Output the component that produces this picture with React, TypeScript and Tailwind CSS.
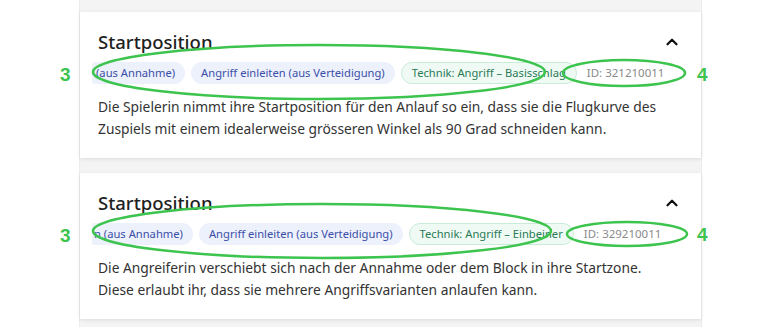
import React from "react";
import { ChevronUp } from "lucide-react";

type Item = {
  chips: { label: string; tone: "blue" | "green" }[];
  shift: number;
  id: string;
  text: string[];
};

const items: Item[] = [
  {
    chips: [
      { label: "(aus Annahme)", tone: "blue" },
      { label: "Angriff einleiten (aus Verteidigung)", tone: "blue" },
      { label: "Technik: Angriff – Basisschlag", tone: "green" },
    ],
    shift: 6,
    id: "321210011",
    text: [
      "Die Spielerin nimmt ihre Startposition für den Anlauf so ein, dass sie die Flugkurve des",
      "Zuspiels mit einem idealerweise grösseren Winkel als 90 Grad schneiden kann.",
    ],
  },
  {
    chips: [
      { label: "n (aus Annahme)", tone: "blue" },
      { label: "Angriff einleiten (aus Verteidigung)", tone: "blue" },
      { label: "Technik: Angriff – Einbeiner", tone: "green" },
    ],
    shift: 8,
    id: "329210011",
    text: [
      "Die Angreiferin verschiebt sich nach der Annahme oder dem Block in ihre Startzone.",
      "Diese erlaubt ihr, dass sie mehrere Angriffsvarianten anlaufen kann.",
    ],
  },
];

const Chip = ({ label, tone }: { label: string; tone: "blue" | "green" }) => (
  <span
    className={
      tone === "blue"
        ? "shrink-0 whitespace-nowrap rounded-full bg-[#edf1fc] px-[10px] h-[22px] leading-[22px] text-[11.2px] text-[#3b4fa8]"
        : "shrink-0 whitespace-nowrap rounded-full border border-[#c9ecd8] bg-[#effaf4] px-[10px] h-[22px] leading-[20px] text-[11.2px] text-[#2a7a57]"
    }
  >
    {label}
  </span>
);

const Card = ({ item }: { item: Item }) => (
  <div className="bg-white shadow-[0_1px_4px_rgba(0,0,0,0.10)] pt-[16px] pb-[18px]">
    <div className="flex items-center justify-between pl-[18px] pr-[20px]">
      <h2 className="text-[18.5px] leading-[28px] font-medium text-[#1f1f1f]">Startposition</h2>
      <ChevronUp size={18} strokeWidth={3} className="text-[#111]" />
    </div>
    <div className="mt-[6px] ml-[12px] mr-[18px] flex items-center gap-[8px] overflow-hidden">
      <div className="flex items-center gap-[6px]" style={{ marginLeft: -item.shift }}>
        {item.chips.map((c) => (
          <Chip key={c.label} label={c.label} tone={c.tone} />
        ))}
      </div>
      <span className="whitespace-nowrap text-[11.5px] text-[#8a8a8a] pl-[2px]">ID: {item.id}</span>
    </div>
    <div className="mt-[12px] pl-[18px] text-[13.8px] leading-[22px] text-[#333]">
      {item.text.map((t) => (
        <p key={t}>{t}</p>
      ))}
    </div>
  </div>
);

export default function App() {
  return (
    <div className="relative w-[770px] h-[327px] overflow-hidden bg-white" style={{ fontFamily: '"Noto Sans", sans-serif' }}>
      <div className="ml-[79px] w-[623px] h-full bg-[#f4f4f4] border-x border-[#ececec] pt-[12px] flex flex-col gap-[15px]">
        {items.map((it) => (
          <Card key={it.id} item={it} />
        ))}
      </div>

      <svg className="absolute inset-0 pointer-events-none" width="770" height="327" viewBox="0 0 770 327">
        <g fill="none" stroke="#3dc44f" strokeWidth="2.5">
          <ellipse cx="319" cy="72" rx="226" ry="27" />
          <ellipse cx="624" cy="73" rx="61" ry="13" />
          <ellipse cx="322" cy="231" rx="229" ry="27" />
          <ellipse cx="627" cy="234" rx="60" ry="12" />
        </g>
      </svg>
      <span className="absolute left-[60px] top-[61px] text-[19px] font-bold text-[#3dc44f]" style={{ fontFamily: '"Liberation Sans", sans-serif' }}>3</span>
      <span className="absolute left-[697px] top-[61px] text-[19px] font-bold text-[#3dc44f]" style={{ fontFamily: '"Liberation Sans", sans-serif' }}>4</span>
      <span className="absolute left-[60px] top-[222px] text-[19px] font-bold text-[#3dc44f]" style={{ fontFamily: '"Liberation Sans", sans-serif' }}>3</span>
      <span className="absolute left-[697px] top-[221px] text-[19px] font-bold text-[#3dc44f]" style={{ fontFamily: '"Liberation Sans", sans-serif' }}>4</span>
    </div>
  );
}
